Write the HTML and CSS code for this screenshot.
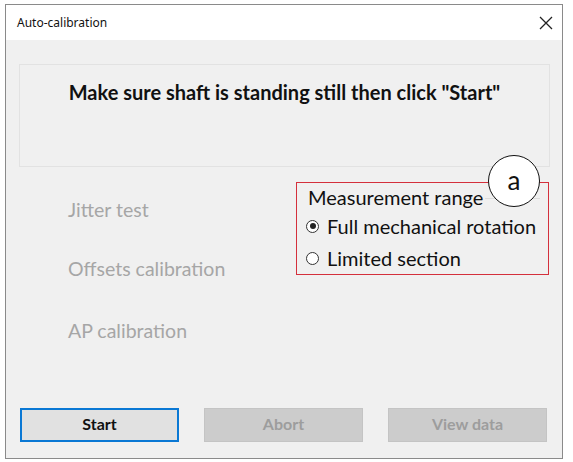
FILE: index.html
```html
<!DOCTYPE html>
<html>
<head>
<meta charset="utf-8">
<link rel="stylesheet" href="styles.css">
</head>
<body>
<div class="window">
  <div class="titlebar">
    <span class="title">Auto-calibration</span>
    <span class="close"><svg width="14" height="14" viewBox="0 0 14 14"><path d="M1 1L13 13M13 1L1 13" stroke="#222" stroke-width="1.3" fill="none"/></svg></span>
  </div>
  <div class="content">
    <div class="message">Make sure shaft is standing still then click "Start"</div>
    <div class="main">
      <div class="steps">
        <div class="step s1">Jitter test</div>
        <div class="step s2">Offsets calibration</div>
        <div class="step s3">AP calibration</div>
      </div>
      <div class="group">
        <div class="legend"><span>Measurement range</span><span class="legend-line"></span></div>
        <label class="radio r1"><span class="dot checked"></span>Full mechanical rotation</label>
        <label class="radio r2"><span class="dot"></span>Limited section</label>
      </div>
    </div>
    <div class="buttons">
      <div class="btn primary">Start</div>
      <div class="btn disabled">Abort</div>
      <div class="btn disabled">View data</div>
    </div>
  </div>
  <div class="callout">a</div>
</div>
</body>
</html>
```
FILE: styles.css
```css
html, body {
  margin: 0;
  padding: 0;
  background: #ffffff;
}
.window {
  position: relative;
  margin: 4px 0 0 5px;
  width: 558px;
  height: 455px;
  box-sizing: border-box;
  border: 1px solid #8a8a8a;
  background: #f0f0f0;
  display: flex;
  flex-direction: column;
  font-family: Lato, "Open Sans", sans-serif;
}
.titlebar {
  height: 35px;
  background: #ffffff;
  display: flex;
  align-items: center;
  padding: 0 9px 0 11px;
  flex-shrink: 0;
}
.title {
  font-family: "Noto Sans", "Open Sans", sans-serif;
  font-size: 12px;
  color: #111;
}
.close {
  margin-left: auto;
  display: flex;
}
.content {
  flex: 1;
  display: flex;
  flex-direction: column;
  padding: 24px 12px 16px 13px;
}
.message {
  border: 1px solid #e2e2e2;
  text-align: center;
  font-weight: 700;
  font-size: 20px;
  line-height: 24px;
  color: #111;
  padding-top: 15px;
  height: 86px;
}
.main {
  display: flex;
  margin-top: 15px;
}
.steps {
  width: 277px;
  padding-left: 49px;
  box-sizing: border-box;
  color: #a6a6a6;
  font-size: 19.5px;
  line-height: 24px;
}
.step.s1 { margin-top: 16px; }
.step.s2 { margin-top: 35px; }
.step.s3 { margin-top: 38px; }
.group {
  width: 253px;
  height: 93px;
  box-sizing: border-box;
  border: 1px solid #d4303c;
  padding: 2px 0 0 9px;
  font-size: 20px;
  line-height: 24px;
  color: #111;
}
.legend {
  display: flex;
  align-items: center;
  margin-left: 2px;
}
.legend-line {
  flex: 1;
  height: 1px;
  background: #dcdcdc;
  margin: 2px 8px 0 2px;
}
.radio {
  display: flex;
  align-items: center;
}
.radio.r1 { margin-top: 5px; }
.radio.r2 { margin-top: 8px; }
.dot {
  width: 13px;
  height: 13px;
  border: 1px solid #333;
  border-radius: 50%;
  background: #fff;
  margin-right: 8px;
  position: relative;
  box-sizing: border-box;
}
.dot.checked::after {
  content: "";
  position: absolute;
  left: 2.5px;
  top: 2.5px;
  width: 6px;
  height: 6px;
  border-radius: 50%;
  background: #222;
}
.buttons {
  margin-top: auto;
  display: flex;
  gap: 25px;
  padding-left: 1px;
}
.btn {
  width: 159px;
  height: 34px;
  box-sizing: border-box;
  display: flex;
  align-items: center;
  justify-content: center;
  font-weight: 700;
  font-size: 16px;
  padding-bottom: 3px;
}
.btn.primary {
  background: #e1e1e1;
  border: 2px solid #0a78d4;
  color: #111;
}
.btn.disabled {
  background: #cccccc;
  border: 1px solid #c4c4c4;
  color: #9d9d9d;
}
.callout {
  position: absolute;
  left: 482px;
  top: 150px;
  width: 52px;
  height: 52px;
  box-sizing: border-box;
  border: 1.5px solid #111;
  border-radius: 50%;
  background: #fff;
  display: flex;
  align-items: center;
  justify-content: center;
  font-size: 26px;
  color: #111;
  padding-bottom: 3px;
}
```
